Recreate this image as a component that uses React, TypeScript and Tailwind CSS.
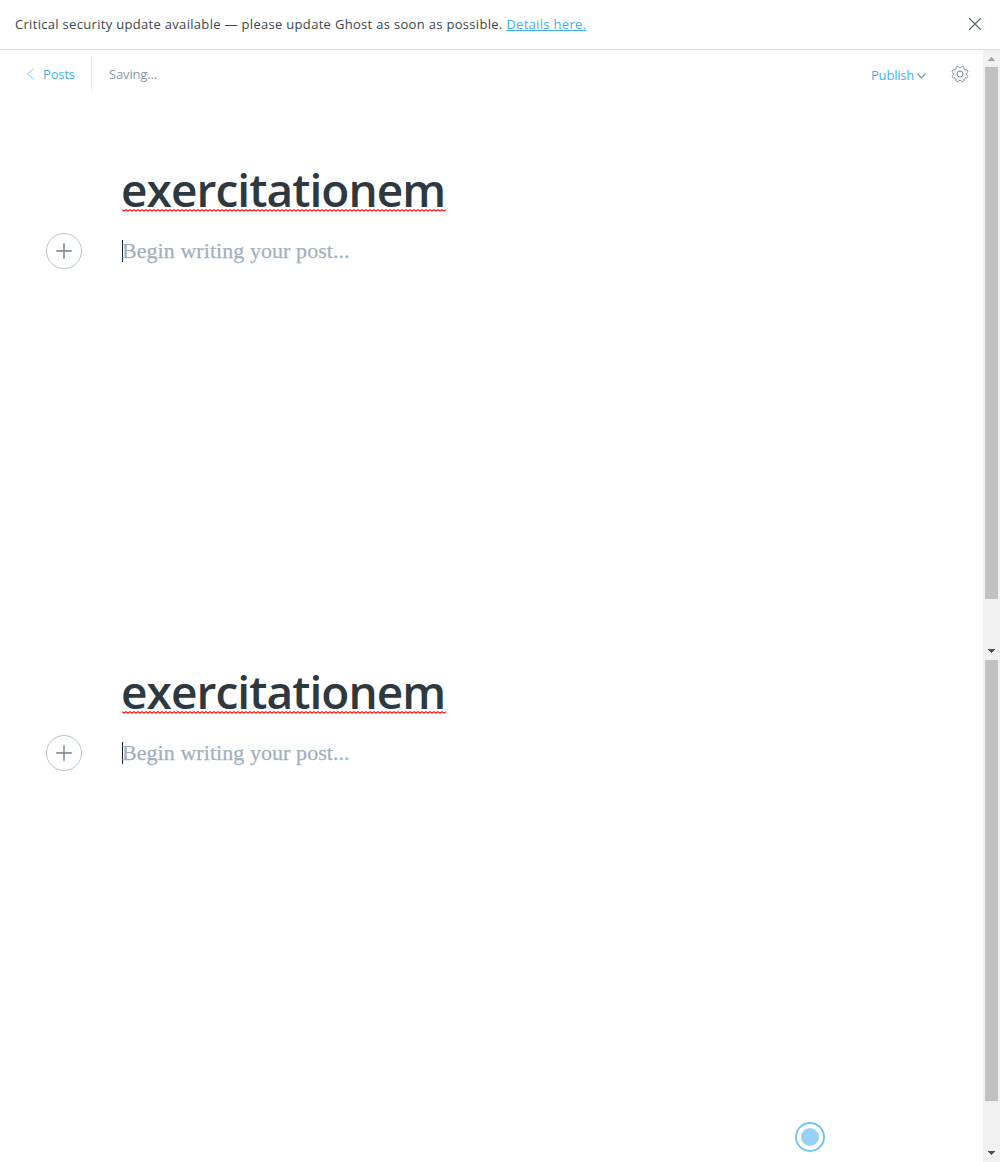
import React from "react";

function Arrow({ up = false, light = false }: { up?: boolean; light?: boolean }) {
  return (
    <svg width="7" height="4" viewBox="0 0 7 4" shapeRendering="crispEdges" className={light ? "fill-[#a3a3a3]" : "fill-[#505050]"}>
      {up ? (
        <path d="M3 0h1v1h1v1h1v1h1v1H0V3h1V2h1V1h1z" />
      ) : (
        <path d="M0 0h7v1H6v1H5v1H4v1H3V3H2V2H1V1H0z" />
      )}
    </svg>
  );
}

function Squiggle() {
  const points = Array.from({ length: 163 }, (_, i) => `${i * 2},${i % 2 ? 2 : 0.7}`).join(" ");
  return (
    <svg width="324" height="3" className="block" aria-hidden="true">
      <polyline points={points} fill="none" stroke="#ff1010" strokeWidth="1.1" />
    </svg>
  );
}

/* Eight rounded teeth traced around a circle, with a ring in the hub. */
function Gear() {
  const points = Array.from({ length: 96 }, (_, i) => {
    const angle = (i / 96) * Math.PI * 2;
    const radius = 7.3 - 0.95 * Math.tanh(1.8 * Math.cos(8 * angle));
    return `${(9 + radius * Math.cos(angle)).toFixed(2)},${(9 + radius * Math.sin(angle)).toFixed(2)}`;
  }).join(" ");
  return (
    <svg className="ml-[24px] mr-[14px]" width="18" height="18" viewBox="0 0 18 18" fill="none" stroke="#738a94" strokeWidth="1" strokeLinejoin="round">
      <polygon points={points} />
      <circle cx="9" cy="9" r="3" />
    </svg>
  );
}

function Editor() {
  return (
    <section className="h-[108px]">
      <div className="relative ml-[122px] h-[50px] w-[323px]">
        <h1 className="-ml-px whitespace-nowrap font-['Open_Sans'] text-[46px] font-semibold leading-[50px] tracking-[-0.95px] text-[#2e383f]">exercitationem</h1>
        <div className="absolute left-0 top-[45px]">
          <Squiggle />
        </div>
      </div>
      <div className="ml-[46px] mt-[19px] flex h-9 items-center">
        <button className="flex size-9 items-center justify-center rounded-full border border-[#b4c4cb]">
          <svg width="16" height="16" viewBox="0 0 16 16" fill="none" stroke="#738088" strokeWidth="1.4" strokeLinecap="round">
            <path d="M8 0.7v14.6M0.7 8h14.6" />
          </svg>
        </button>
        <span className="ml-10 h-[22px] w-px bg-[#15212a]" />
        <p className="-ml-px whitespace-nowrap font-['Liberation_Serif'] text-[22px] leading-9 tracking-[0.06px] text-[#9fb1ba] [-webkit-text-stroke:0.25px_#9fb1ba]">Begin writing your post...</p>
      </div>
    </section>
  );
}

export default function App() {
  return (
    <div className="flex h-[1162px] w-[1000px] flex-col overflow-hidden bg-white font-['Open_Sans',sans-serif]">
      <header className="flex h-[50px] shrink-0 items-center justify-between border-b border-[#dddddd] pl-[15px] pr-[19px]">
        <p className="mb-[2px] whitespace-nowrap text-[13px] leading-5 tracking-[0.31px] text-[#3a464c]">
          Critical security update available — please update Ghost as soon as possible.{" "}
          <a className="text-[#3eb0ef] underline underline-offset-1">Details here.</a>
        </p>
        <svg className="mb-px" width="12" height="12" viewBox="0 0 12 12" fill="none" stroke="#54666d" strokeWidth="1.1" strokeLinecap="round">
          <path d="M.5.5l11 11M11.5.5l-11 11" />
        </svg>
      </header>
      <div className="flex min-h-0 flex-1">
        <main className="w-[983px]">
          <nav className="flex h-[48px] items-center">
            <a className="ml-[26px] flex items-center text-[13px] text-[#3eb0ef]">
              <svg width="9" height="12" viewBox="0 0 9 12" fill="none" stroke="#7cc9f4" strokeWidth="1">
                <path d="M8 .5L1.5 6 8 11.5" />
              </svg>
              <span className="ml-2 mt-0.5 w-12 tracking-[-0.15px]">Posts</span>
            </a>
            <span className="h-9 w-px bg-[#e3ebef]" />
            <span className="ml-[17px] mt-0.5 text-[13px] tracking-[-0.15px] text-[#839ba6]">Saving...</span>
            <a className="ml-auto mt-1 flex items-center text-[13px] text-[#3eb0ef]">
              <span className="w-[46px] whitespace-nowrap tracking-[-0.2px]">Publish</span>
              <svg width="9" height="6" viewBox="0 0 9 6" fill="none" stroke="#6f8d9b" strokeWidth="1.1">
                <path d="M.5.7l4 4.2 4-4.2" />
              </svg>
            </a>
            <span className="w-px" />
            <Gear />
          </nav>
          <div className="mt-[66px]">
            <Editor />
          </div>
          <div className="mt-[394px]">
            <Editor />
          </div>
          <div className="ml-[795px] mt-[348px] flex size-[30px] items-center justify-center rounded-full border-2 border-[#73c6f3]">
            <div className="size-[18px] rounded-full bg-[#96d3f7]" />
          </div>
        </main>
        <aside className="flex w-[17px] flex-col items-center bg-[#f1f1f1]">
          <div className="flex h-[17px] items-center"><Arrow up light /></div>
          <div className="h-[532px] w-[13px] bg-[#c1c1c1]" />
          <div className="mt-[43px] flex h-[18px] items-center"><Arrow /></div>
          <div className="h-[441px] w-[13px] bg-[#c1c1c1]" />
          <div className="mt-[43px] flex h-[18px] items-center"><Arrow /></div>
        </aside>
      </div>
    </div>
  );
}
